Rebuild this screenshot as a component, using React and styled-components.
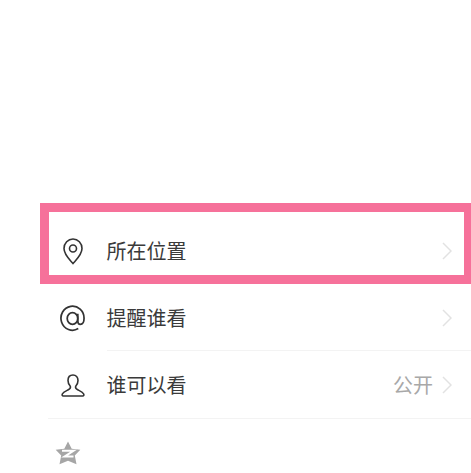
import styled, { createGlobalStyle } from "styled-components";

const GlobalStyle = createGlobalStyle`
  html, body {
    margin: 0;
    padding: 0;
    background: #fff;
    overflow: hidden;
  }
`;

const Page = styled.div`
  position: relative;
  width: 471px;
  height: 473px;
  overflow: hidden;
  padding-top: 217px;
  box-sizing: border-box;
  background: #fff;
  font-family: "Noto Sans CJK SC", "Liberation Sans", sans-serif;
`;

const Highlight = styled.div`
  position: absolute;
  left: 40px;
  top: 203px;
  width: 431px;
  height: 81px;
  box-sizing: border-box;
  border: solid #f6719a;
  border-width: 9px 7px 9px 9px;
  pointer-events: none;
`;

const Row = styled.div`
  display: flex;
  align-items: center;
  height: 67px;
  padding-left: 48px;
  box-sizing: border-box;
`;

const IconSlot = styled.div`
  width: 50px;
  flex: none;
  display: flex;
  justify-content: center;
  padding-right: ${(props) => props.$right || 0}px;
  padding-top: ${(props) => props.$top || 0}px;
  box-sizing: border-box;
`;

const Body = styled.div`
  flex: 1;
  height: 100%;
  margin-left: 8.5px;
  padding-right: 19px;
  display: flex;
  align-items: center;
  box-sizing: border-box;
  box-shadow: ${(props) => (props.$line ? "inset 0 -1px 0 #f3f3f3" : "none")};
`;

const Label = styled.span`
  flex: 1;
  font-size: 20px;
  line-height: 28px;
  color: #3a3a3a;
`;

const Value = styled.span`
  font-size: 20px;
  line-height: 28px;
  color: #a8a8a8;
  margin-right: 9px;
`;

const Divider = styled.div`
  height: 1px;
  margin-left: 48px;
  background: #f3f3f3;
`;

const Chevron = () => (
  <svg width="10" height="18" viewBox="0 0 10 18" fill="none">
    <path d="M1 1l8 8-8 8" stroke="#e2e2e2" strokeWidth="1.5" />
  </svg>
);

const PinIcon = () => (
  <svg width="24" height="28" viewBox="0 0 24 28" fill="none" stroke="#333" strokeWidth="1.6">
    <path d="M12 26.500C8 22 3 17.500 3 11.500a9 9.500 0 0 1 18 0C21 17.500 16 22 12 26.500z" />
    <circle cx="12" cy="11.500" r="3.500" />
  </svg>
);

const AtIcon = () => (
  <svg width="25" height="27" viewBox="0 0 26 28" fill="none" stroke="#333" strokeWidth="1.8">
    <path d="M19 24.500A12 12.500 0 1 1 25 14c0 3.500-1.500 6-3.800 6-1.900 0-2.700-1.500-2.700-3.500V9" />
    <ellipse cx="13" cy="14" rx="5.500" ry="6" />
  </svg>
);

const PersonIcon = () => (
  <svg width="26" height="24" viewBox="0 0 26 24" fill="none" stroke="#333" strokeWidth="1.6">
    <path d="M13 1c-3 0-5 2.200-5 5.500 0 2.500 1 4.500 2.300 5.800.5 1.500-.3 2.700-2 3.500-2.500 1.200-5 2-6 4.200-.5 1.200 0 2 1 2h19.400c1 0 1.500-.8 1-2-1-2.200-3.500-3-6-4.200-1.700-.8-2.500-2-2-3.500C17 11 18 9 18 6.500 18 3.200 16 1 13 1z" />
  </svg>
);

const StarIcon = () => (
  <svg width="26" height="24" viewBox="0 0 26 24">
    <path
      d="M13 .5l3.700 7.300 8.600 1-5.500 5.700 1.700 8.700-8.500-3.400-8.500 3.400 1.700-8.700L.7 8.800l8.600-1z"
      fill="#a6a6a6"
    />
    <path d="M7 9.800h11.500l-9 5.800h9" fill="none" stroke="#fff" strokeWidth="2" />
  </svg>
);

const rows = [
  { label: "所在位置", icon: <PinIcon />, right: 1 },
  { label: "提醒谁看", icon: <AtIcon />, right: 2, top: 2, line: true },
  { label: "谁可以看", icon: <PersonIcon />, top: 2, value: "公开" },
];

export default function App() {
  return (
    <Page>
      <GlobalStyle />
      {rows.map((row) => (
        <Row key={row.label}>
          <IconSlot $right={row.right} $top={row.top}>
            {row.icon}
          </IconSlot>
          <Body $line={row.line}>
            <Label>{row.label}</Label>
            {row.value && <Value>{row.value}</Value>}
            <Chevron />
          </Body>
        </Row>
      ))}
      <Divider />
      <Row>
        <IconSlot $right={10}>
          <StarIcon />
        </IconSlot>
      </Row>
      <Highlight />
    </Page>
  );
}
